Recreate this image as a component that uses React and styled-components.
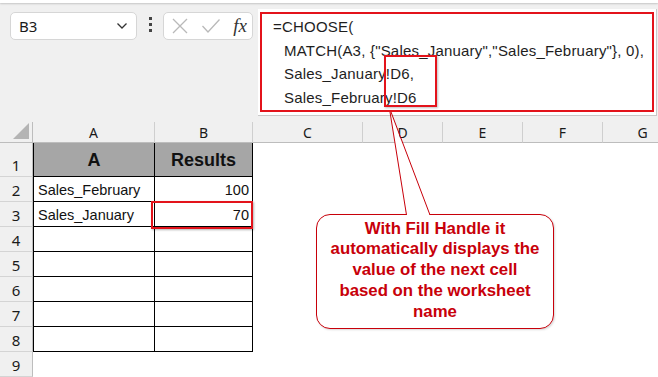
import React from "react";
import styled, { createGlobalStyle } from "styled-components";

const GlobalStyle = createGlobalStyle`
  html, body {
    margin: 0;
    padding: 0;
    background: #ffffff;
  }
  body {
    font-family: "Liberation Sans", Arial, sans-serif;
    overflow: hidden;
  }
`;

const RED = "#e3131b";
const CALLOUT_RED = "#c8000a";

const Page = styled.div`
  position: relative;
  width: 658px;
  height: 377px;
  overflow: hidden;
  background: #ffffff;
`;

const RibbonEdge = styled.div`
  height: 3px;
  background: #ffffff;
  box-shadow: 0 1px 2px rgba(0, 0, 0, 0.18);
  position: relative;
  z-index: 1;
`;

const TopBar = styled.div`
  height: 119px;
  background: #f0f0f0;
  display: flex;
  align-items: flex-start;
  padding: 6px 0 0 10px;
  box-sizing: border-box;
`;

const NameBox = styled.div`
  margin-top: 3px;
  width: 127px;
  height: 28px;
  box-sizing: border-box;
  background: #ffffff;
  border: 1px solid #d6d6d6;
  border-radius: 5px;
  display: flex;
  align-items: center;
  justify-content: space-between;
  padding: 0 8px 0 8px;
  font-family: "Noto Sans", "Open Sans", sans-serif;
  font-size: 15px;
  color: #1a1a1a;
`;

const Dots = styled.div`
  margin-top: 8px;
  width: 26px;
  display: flex;
  flex-direction: column;
  align-items: center;
  gap: 3px;
  span {
    width: 3px;
    height: 3px;
    background: #444;
  }
`;

const FxBox = styled.div`
  margin-top: 3px;
  width: 90px;
  height: 28px;
  box-sizing: border-box;
  background: #ffffff;
  border: 1px solid #d6d6d6;
  border-radius: 5px;
  display: flex;
  align-items: center;
  justify-content: space-between;
  padding: 0 5px 0 7px;
`;

const Fx = styled.span`
  font-family: "Liberation Serif", "Times New Roman", serif;
  font-style: italic;
  font-size: 19px;
  color: #333;
`;

const FormulaBar = styled.div`
  position: relative;
  margin-left: 5px;
  width: 399px;
  height: 107px;
  box-sizing: border-box;
  background: #ffffff;
  border-right: 1px solid #c8c8c8;
  border-bottom: 1px solid #c8c8c8;
  padding: 3px 2px 3px 2px;
`;

const FormulaFrame = styled.div`
  height: 100%;
  box-sizing: border-box;
  border: 2px solid ${RED};
  padding: 1px 0 0 11px;
  font-family: "Liberation Sans", Arial, sans-serif;
  font-size: 15px;
  letter-spacing: 0.2px;
  line-height: 23.5px;
  color: #1e1e1e;
`;

const FormulaLine = styled.div`
  padding-left: ${(p) => (p.indent ? "11px" : "0")};
  white-space: pre;
`;

const RefBox = styled.div`
  position: absolute;
  left: 126px;
  top: 46px;
  width: 53px;
  height: 52px;
  box-sizing: border-box;
  border: 2px solid ${RED};
  box-shadow: 1px 1px 2px rgba(0, 0, 0, 0.25);
`;

const Sheet = styled.div`
  display: grid;
  grid-template-columns: 33px 122px 98px 110px 80px 80px 80px 80px;
  grid-template-rows: 21px 34px repeat(8, 25px);
  font-family: "Liberation Sans", Arial, sans-serif;
`;

const ColHead = styled.div`
  background: #f0f0f0;
  border-right: 1px solid #cfcfcf;
  border-bottom: 1px solid #bdbdbd;
  display: flex;
  align-items: center;
  justify-content: center;
  font-family: "Noto Sans", "Open Sans", sans-serif;
  font-size: 14px;
  color: #1a1a1a;
`;

const Corner = styled(ColHead)`
  position: relative;
  border-right: 1px solid #bdbdbd;
  &::after {
    content: "";
    position: absolute;
    right: 3px;
    bottom: 3px;
    width: 0;
    height: 0;
    border-left: 16px solid transparent;
    border-bottom: 16px solid #b4b4b4;
  }
`;

const RowHead = styled.div`
  background: #f0f0f0;
  border-right: 1px solid #bdbdbd;
  border-bottom: 1px solid #d4d4d4;
  display: flex;
  align-items: flex-end;
  justify-content: center;
  padding-bottom: 1px;
  box-sizing: border-box;
  font-family: "Noto Sans", "Open Sans", sans-serif;
  font-size: 15px;
  color: #1a1a1a;
`;

const Cell = styled.div`
  position: relative;
  box-sizing: border-box;
  display: flex;
  align-items: flex-end;
  justify-content: ${(p) => (p.right ? "flex-end" : "flex-start")};
  padding: 0 3px 3px 4px;
  font-size: 14.5px;
  color: #111;
  background: ${(p) => (p.head ? "#a6a6a6" : "#ffffff")};
  border-right: ${(p) => (p.table ? "1px solid #000" : "none")};
  border-bottom: ${(p) => (p.table ? "1px solid #000" : "none")};
  border-left: ${(p) => (p.first ? "1px solid #000" : "none")};
  ${(p) =>
    p.head &&
    `
    justify-content: center;
    align-items: center;
    padding: 2px 0 0 0;
    font-size: 18px;
    font-weight: bold;
  `}
`;

const Highlight = styled.div`
  position: absolute;
  z-index: 2;
  left: -4px;
  top: -1px;
  right: -1px;
  bottom: -3px;
  border: 2.5px solid ${RED};
  box-shadow: 1px 1px 2px rgba(0, 0, 0, 0.3);
  pointer-events: none;
`;

const Callout = styled.div`
  position: absolute;
  left: 316px;
  top: 214px;
  width: 238px;
  height: 115px;
  box-sizing: border-box;
  border: 1.5px solid ${CALLOUT_RED};
  border-radius: 14px;
  background: #ffffff;
  box-shadow: 1px 1px 2px rgba(0, 0, 0, 0.15);
  display: flex;
  align-items: center;
  justify-content: center;
  text-align: center;
  padding: 0 2px 2px;
  font-family: "Liberation Sans", Arial, sans-serif;
  font-weight: bold;
  font-size: 16.8px;
  line-height: 20.8px;
  white-space: nowrap;
  color: ${CALLOUT_RED};
`;

const TailLayer = styled.svg`
  position: absolute;
  left: 0;
  top: 0;
  pointer-events: none;
`;

const columns = ["A", "B", "C", "D", "E", "F", "G"];

const rows = [
  { n: 1, a: "A", b: "Results", head: true },
  { n: 2, a: "Sales_February", b: "100" },
  { n: 3, a: "Sales_January", b: "70", mark: true },
  { n: 4 },
  { n: 5 },
  { n: 6 },
  { n: 7 },
  { n: 8 },
  { n: 9, outside: true },
];

const calloutLines = [
  "With Fill Handle it",
  "automatically displays the",
  "value of the next cell",
  "based on the worksheet",
  "name",
];

const Chevron = () => (
  <svg width="12" height="8" viewBox="0 0 12 8">
    <path d="M1.5 1.5 L6 6 L10.5 1.5" fill="none" stroke="#333" strokeWidth="1.3" />
  </svg>
);

const CancelIcon = () => (
  <svg width="18" height="18" viewBox="0 0 18 18">
    <path d="M2 2 L16 16 M16 2 L2 16" stroke="#b9b9b9" strokeWidth="1.3" />
  </svg>
);

const EnterIcon = () => (
  <svg width="20" height="16" viewBox="0 0 20 16">
    <path d="M1.5 8 L7 14 L18.5 1.5" fill="none" stroke="#b9b9b9" strokeWidth="1.3" />
  </svg>
);

export default function App() {
  return (
    <Page>
      <GlobalStyle />
      <RibbonEdge />
      <TopBar>
        <NameBox>
          <span>B3</span>
          <Chevron />
        </NameBox>
        <Dots>
          <span />
          <span />
          <span />
        </Dots>
        <FxBox>
          <CancelIcon />
          <EnterIcon />
          <Fx>fx</Fx>
        </FxBox>
        <FormulaBar>
          <FormulaFrame>
            <FormulaLine>=CHOOSE(</FormulaLine>
            <FormulaLine indent>MATCH(A3, {"{"}"Sales_January","Sales_February"{"}"}, 0),</FormulaLine>
            <FormulaLine indent>Sales_January!D6,</FormulaLine>
            <FormulaLine indent>Sales_February!D6</FormulaLine>
          </FormulaFrame>
          <RefBox />
        </FormulaBar>
      </TopBar>

      <Sheet>
        <Corner />
        {columns.map((c) => (
          <ColHead key={c}>{c}</ColHead>
        ))}
        {rows.map((r) => (
          <React.Fragment key={r.n}>
            <RowHead>{r.n}</RowHead>
            <Cell table={!r.outside} first={!r.outside} head={r.head}>
              {r.a}
            </Cell>
            <Cell table={!r.outside} head={r.head} right>
              {r.b}
              {r.mark && <Highlight />}
            </Cell>
            {[0, 1, 2, 3, 4].map((k) => (
              <Cell key={k} />
            ))}
          </React.Fragment>
        ))}
      </Sheet>

      <Callout>
        <div>
          {calloutLines.map((l) => (
            <div key={l}>{l}</div>
          ))}
        </div>
      </Callout>

      <TailLayer width="658" height="377" viewBox="0 0 658 377">
        <polygon points="390,112 406.5,215.5 430,215.5" fill="#ffffff" />
        <path d="M390 112 L406.5 215" stroke={CALLOUT_RED} strokeWidth="1" fill="none" />
        <path d="M391 112 L430 215" stroke={CALLOUT_RED} strokeWidth="1" fill="none" />
      </TailLayer>
    </Page>
  );
}
